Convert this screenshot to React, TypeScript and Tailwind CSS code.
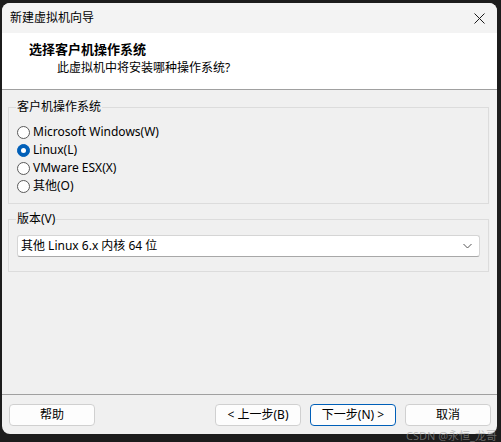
import React, { useState } from 'react';

type OsKind = 'windows' | 'linux' | 'esx' | 'other';

const OS_OPTIONS: { id: OsKind; label: string }[] = [
  { id: 'windows', label: 'Microsoft Windows(W)' },
  { id: 'linux', label: 'Linux(L)' },
  { id: 'esx', label: 'VMware ESX(X)' },
  { id: 'other', label: '其他(O)' },
];

const FONT = "font-['Noto_Sans','Noto_Sans_CJK_SC',sans-serif]";

const Radio: React.FC<{ checked: boolean; label: string; onSelect: () => void }> = ({ checked, label, onSelect }) => (
  <label className="flex items-center h-[18px] cursor-default" onClick={onSelect}>
    <span
      className={`w-[13px] h-[13px] rounded-full flex items-center justify-center shrink-0 ${
        checked ? 'bg-[#005fb8] border border-[#005fb8]' : 'bg-white border border-[#5a5a5a]'
      }`}
    >
      {checked && <span className="w-[5px] h-[5px] rounded-full bg-white" />}
    </span>
    <span className="ml-[3px] text-[12px] text-black leading-none">{label}</span>
  </label>
);

const DialogButton: React.FC<{ label: string; primary?: boolean }> = ({ label, primary }) => (
  <button
    className={`w-[86px] h-[22px] rounded-[4px] bg-[#fdfdfd] text-[12px] text-black leading-none ${
      primary ? 'border border-[#005fb8]' : 'border border-[#d0d0d0]'
    }`}
  >
    {label}
  </button>
);

export default function App() {
  const [os, setOs] = useState<OsKind>('linux');

  return (
    <div className={`w-[501px] h-[442px] bg-[#1c1c1c] pl-[2px] pt-[3px] overflow-hidden relative ${FONT}`}>
      <div className="w-[495px] h-[431px] bg-[#f0f0f0] rounded-[8px] overflow-hidden flex flex-col">
        {/* title bar */}
        <div className="h-[30px] bg-[#f3f3f3] flex items-center justify-between pl-[8px] pr-[8px] shrink-0">
          <span className="text-[12px] text-black">新建虚拟机向导</span>
          <svg width="11" height="11" viewBox="0 0 11 11" className="mr-[4px]">
            <path d="M0.5 0.5 L10.5 10.5 M10.5 0.5 L0.5 10.5" stroke="#1a1a1a" strokeWidth="1" />
          </svg>
        </div>

        {/* header */}
        <div className="h-[57px] bg-white border-b border-[#a0a0a0] pl-[27px] pt-[8px] shrink-0">
          <div className="text-[13px] font-bold text-black leading-[17px]">选择客户机操作系统</div>
          <div className="text-[12px] text-black leading-[16px] pl-[28px] mt-[2px]">此虚拟机中将安装哪种操作系统?</div>
        </div>

        {/* body */}
        <div className="flex-1 pl-[6px] pr-[8px] pt-[9px]">
          <fieldset className="border border-[#dcdcdc] px-[8px] pb-[8px] pt-[8px]">
            <legend className="-ml-[1px] px-[1px] text-[12px] text-black leading-[16px]">客户机操作系统</legend>
            {OS_OPTIONS.map(o => (
              <Radio key={o.id} checked={os === o.id} label={o.label} onSelect={() => setOs(o.id)} />
            ))}
          </fieldset>

          <fieldset className="border border-[#dcdcdc] mt-[7px] px-[8px] pt-[8px] pb-[14px]">
            <legend className="-ml-[1px] px-[1px] text-[12px] text-black leading-[16px]">版本(V)</legend>
            <div className="h-[22px] bg-white border border-[#d5d5d5] border-b-[#a8a8a8] rounded-[3px] flex items-center justify-between pl-[3px] pr-[7px]">
              <span className="text-[12px] text-black">其他 Linux 6.x 内核 64 位</span>
              <svg width="9" height="6" viewBox="0 0 9 6">
                <path d="M0.5 1 L4.5 5 L8.5 1" fill="none" stroke="#555" strokeWidth="1" />
              </svg>
            </div>
          </fieldset>
        </div>

        {/* footer */}
        <div className="border-t border-[#a0a0a0] h-[40px] pt-[9px] pl-[7px] pr-[6px] flex shrink-0">
          <DialogButton label="帮助" />
          <div className="flex-1" />
          <div className="flex gap-[9px]">
            <DialogButton label="< 上一步(B)" />
            <DialogButton label="下一步(N) >" primary />
            <DialogButton label="取消" />
          </div>
        </div>
      </div>
      <span className="absolute right-[4px] bottom-[-1px] text-[11px] text-[#9a9a9a]/60 leading-[14px]">CSDN @永恒_龙哥</span>
    </div>
  );
}
